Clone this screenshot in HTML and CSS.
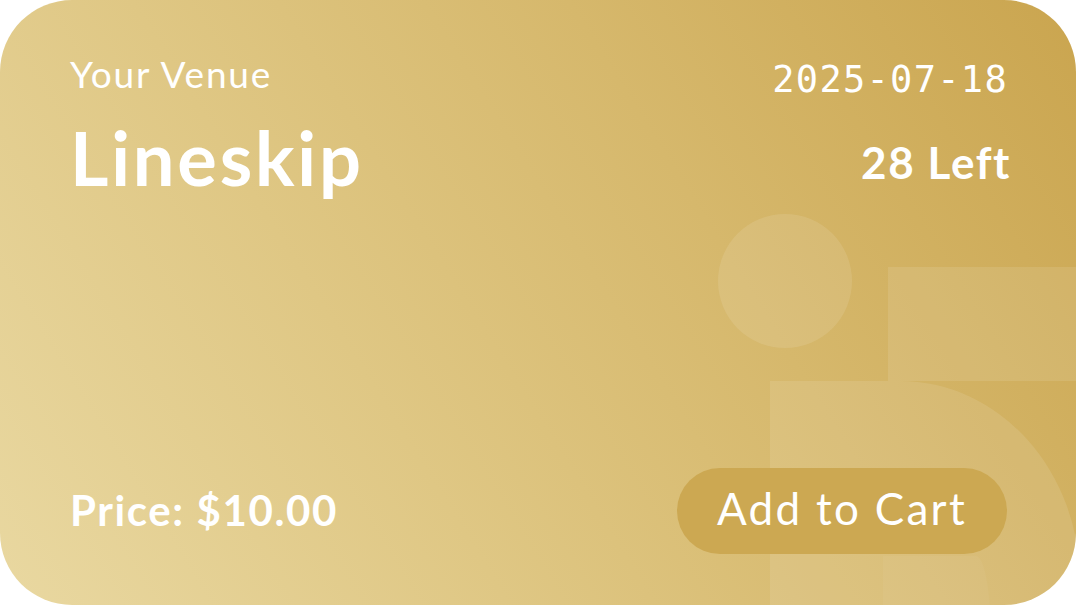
FILE: index.html
```html
<!DOCTYPE html>
<html lang="en">
<head>
<meta charset="utf-8">
<title>Lineskip Ticket</title>
<link rel="stylesheet" href="styles.css">
</head>
<body>
<div class="card">
  <div class="deco">
    <span class="deco-circle"></span>
    <span class="deco-rect"></span>
    <span class="deco-arch"></span>
    <span class="deco-foot"></span>
  </div>
  <div class="top">
    <div class="left-col">
      <div class="venue">Your Venue</div>
      <div class="title">Lineskip</div>
    </div>
    <div class="right-col">
      <div class="date">2025-07-18</div>
      <div class="remaining">28 Left</div>
    </div>
  </div>
  <div class="bottom">
    <div class="price">Price: $10.00</div>
    <button class="cart-btn">Add to Cart</button>
  </div>
</div>
</body>
</html>
```
FILE: styles.css
```css
html, body {
  margin: 0;
  padding: 0;
  background: #ffffff;
}
body {
  width: 1076px;
  height: 605px;
  overflow: hidden;
  font-family: "Lato", "Noto Sans", sans-serif;
}
.card {
  position: relative;
  box-sizing: border-box;
  width: 1076px;
  height: 605px;
  border-radius: 72px;
  overflow: hidden;
  background: linear-gradient(58deg, #e9d8a1 0%, #dfc784 35%, #d6b86c 65%, #caa54f 100%);
  padding: 52px 66px 51px 70px;
  display: flex;
  flex-direction: column;
  justify-content: space-between;
  color: #ffffff;
}
.deco {
  position: absolute;
  inset: 0;
  pointer-events: none;
}
.deco span {
  position: absolute;
  background: rgba(255, 255, 255, 0.1);
}
.deco-circle {
  left: 718px;
  top: 214px;
  width: 134px;
  height: 134px;
  border-radius: 50%;
}
.deco-rect {
  left: 888px;
  top: 267px;
  width: 200px;
  height: 114px;
}
.deco-arch {
  left: 770px;
  top: 381px;
  width: 310px;
  height: 260px;
  border-top-right-radius: 180px 200px;
}
.deco .deco-foot {
  left: 883px;
  top: 556px;
  width: 108px;
  height: 80px;
  background: rgba(255, 255, 255, 0.04);
  border-top-right-radius: 30px 160px;
}
.top, .bottom {
  position: relative;
  display: flex;
  justify-content: space-between;
}
.top {
  align-items: flex-start;
}
.bottom {
  align-items: center;
}
.venue {
  font-size: 37px;
  font-weight: 400;
  line-height: 44px;
  letter-spacing: 1.8px;
}
.title {
  font-size: 74px;
  font-weight: 700;
  line-height: 90px;
  margin-top: 17px;
  letter-spacing: 2.8px;
}
.right-col {
  display: flex;
  flex-direction: column;
  align-items: flex-end;
}
.date {
  font-family: "DejaVu Sans Mono", "Liberation Mono", monospace;
  font-size: 37px;
  font-weight: 400;
  line-height: 52px;
  letter-spacing: 1.3px;
  margin-top: 2px;
  margin-right: 2px;
}
.remaining {
  font-size: 44px;
  font-weight: 700;
  line-height: 56px;
  margin-top: 28px;
  letter-spacing: 1.6px;
  margin-right: -1px;
}
.price {
  font-size: 42px;
  font-weight: 700;
  letter-spacing: 1.6px;
  margin-top: -2px;
}
.cart-btn {
  font-family: inherit;
  font-size: 44px;
  font-weight: 400;
  line-height: 1;
  letter-spacing: 2.3px;
  color: #ffffff;
  background: #cca852;
  border: none;
  border-radius: 44px;
  height: 86px;
  padding: 0 40px 6px 40px;
  margin-right: 3px;
}
```
